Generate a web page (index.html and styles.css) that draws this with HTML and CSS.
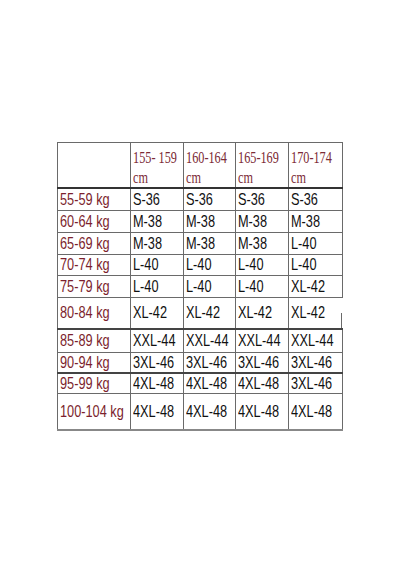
FILE: index.html
```html
<!DOCTYPE html>
<html>
<head>
<meta charset="utf-8">
<link rel="stylesheet" href="styles.css">
</head>
<body>
<div class="page">
<table class="chart">
  <colgroup>
    <col class="c0"><col class="c1"><col class="c2"><col class="c3"><col class="c4">
  </colgroup>
  <tr class="head">
    <td></td>
    <td class="h"><span class="t">155- 159</span><br><span class="t">cm</span></td>
    <td class="h"><span class="t">160-164</span><br><span class="t">cm</span></td>
    <td class="h"><span class="t">165-169</span><br><span class="t">cm</span></td>
    <td class="h"><span class="t">170-174</span><br><span class="t">cm</span></td>
  </tr>
  <tr class="r"><td class="w"><span class="t">55-59 kg</span></td><td><span class="t">S-36</span></td><td><span class="t">S-36</span></td><td><span class="t">S-36</span></td><td><span class="t">S-36</span></td></tr>
  <tr class="r"><td class="w"><span class="t">60-64 kg</span></td><td><span class="t">M-38</span></td><td><span class="t">M-38</span></td><td><span class="t">M-38</span></td><td><span class="t">M-38</span></td></tr>
  <tr class="r"><td class="w"><span class="t">65-69 kg</span></td><td><span class="t">M-38</span></td><td><span class="t">M-38</span></td><td><span class="t">M-38</span></td><td><span class="t">L-40</span></td></tr>
  <tr class="r r21"><td class="w"><span class="t">70-74 kg</span></td><td><span class="t">L-40</span></td><td><span class="t">L-40</span></td><td><span class="t">L-40</span></td><td><span class="t">L-40</span></td></tr>
  <tr class="r"><td class="w"><span class="t">75-79 kg</span></td><td><span class="t">L-40</span></td><td><span class="t">L-40</span></td><td><span class="t">L-40</span></td><td><span class="t">XL-42</span></td></tr>
  <tr class="r tall1"><td class="w"><span class="t">80-84 kg</span></td><td><span class="t">XL-42</span></td><td><span class="t">XL-42</span></td><td><span class="t">XL-42</span></td><td class="open"><span class="t">XL-42</span></td></tr>
  <tr class="r r23"><td class="w"><span class="t">85-89 kg</span></td><td><span class="t">XXL-44</span></td><td><span class="t">XXL-44</span></td><td><span class="t">XXL-44</span></td><td><span class="t">XXL-44</span></td></tr>
  <tr class="r r19"><td class="w"><span class="t">90-94 kg</span></td><td><span class="t">3XL-46</span></td><td><span class="t">3XL-46</span></td><td><span class="t">3XL-46</span></td><td><span class="t">3XL-46</span></td></tr>
  <tr class="r r19 dark"><td class="w"><span class="t">95-99 kg</span></td><td><span class="t">4XL-48</span></td><td><span class="t">4XL-48</span></td><td><span class="t">4XL-48</span></td><td><span class="t">3XL-46</span></td></tr>
  <tr class="r tall2"><td class="w"><span class="t">100-104 kg</span></td><td><span class="t">4XL-48</span></td><td><span class="t">4XL-48</span></td><td><span class="t">4XL-48</span></td><td><span class="t">4XL-48</span></td></tr>
</table>
</div>
</body>
</html>
```
FILE: styles.css
```css
html, body {
  margin: 0;
  padding: 0;
  background: #ffffff;
}
.page {
  width: 400px;
  height: 570px;
  padding: 142px 0 0 57px;
  box-sizing: border-box;
}
.chart {
  border-collapse: collapse;
  table-layout: fixed;
  width: 285px;
}
.c0 { width: 73px; }
.c1 { width: 53px; }
.c2 { width: 52px; }
.c3 { width: 53px; }
.c4 { width: 54px; }
.chart td {
  border: 1px solid #6a6a6a;
  padding: 0 0 0 2px;
  font-family: "Liberation Sans", Arial, sans-serif;
  font-size: 17px;
  color: #111111;
  vertical-align: middle;
  white-space: nowrap;
  line-height: 18px;
}
.t {
  display: inline-block;
  transform: scaleX(0.75);
  transform-origin: left center;
  max-width: 0;
  overflow: visible;
}
.chart .w {
  color: #7c1f2e;
}
.head td {
  height: 39px;
  vertical-align: top;
  border-bottom: 2px solid #333333;
}
.chart .h {
  font-family: "Liberation Serif", "Times New Roman", serif;
  font-size: 17.5px;
  color: #7b2a35;
  line-height: 20px;
  padding-top: 4px;
}
.chart .h .t {
  transform: scaleX(0.7);
}
.r td { height: 21px; }
.r21 td { height: 20px; }
.r23 td { height: 22px; }
.r19 td { height: 19px; }
.tall1 td { height: 30px; }
.tall1 td.open {
  border-right-color: transparent;
  background: linear-gradient(#6a6a6a, #6a6a6a) right bottom / 1px 50% no-repeat;
}
.tall2 td { height: 35px; border-bottom: 2px solid #888888; }
.dark td { border-top: 2px solid #444444; }
.tall1 + .r td { border-top: 2px solid #444444; }
```
